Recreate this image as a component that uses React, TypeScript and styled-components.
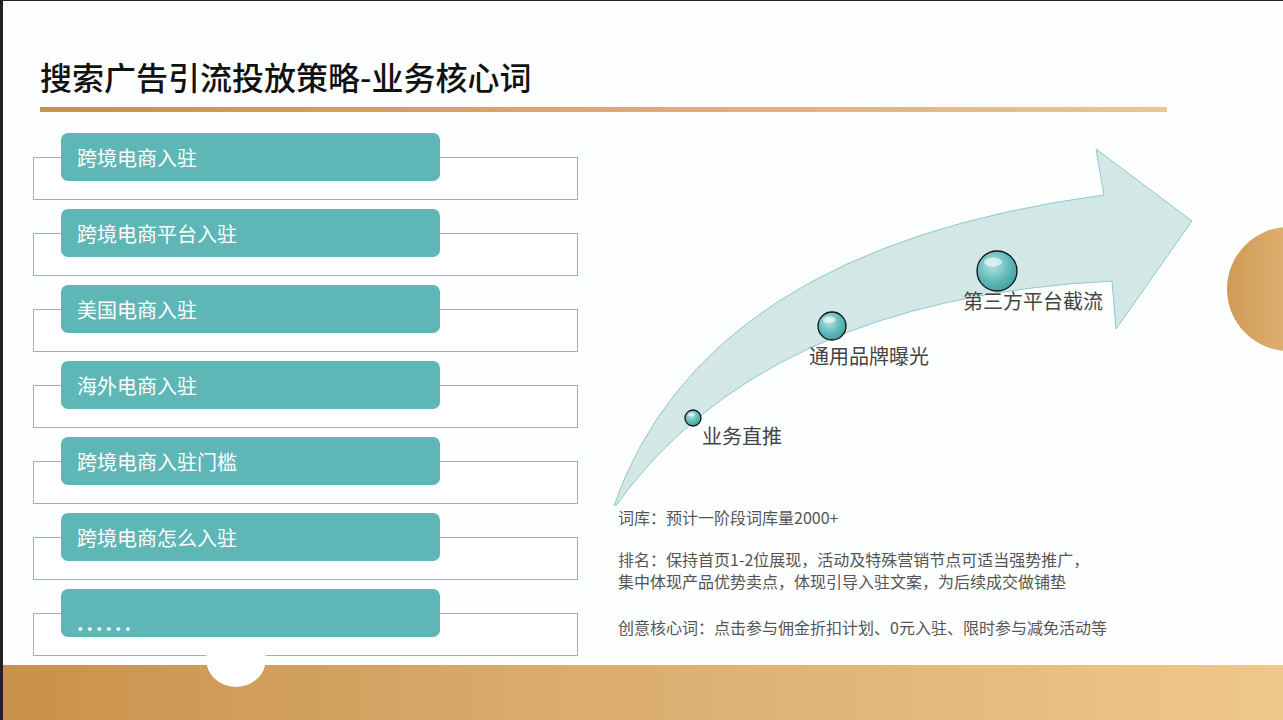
import styled, { createGlobalStyle } from 'styled-components';

const Global = createGlobalStyle`
  body { margin: 0; background: #fff; }
`;

const Page = styled.div`
  position: relative;
  width: 1280px;
  height: 719px;
  border-left: 3px solid #222;
  border-top: 1px solid #222;
  background: #fdfefe;
  overflow: hidden;
  font-family: "Noto Sans CJK SC", "Noto Sans", sans-serif;
  display: flex;
  flex-direction: column;
`;

const Title = styled.h1`
  margin: 55px 0 0 37px;
  font-size: 32px;
  line-height: 40px;
  font-weight: 500;
  color: #111;
`;

const GoldLine = styled.div`
  margin: 11px 0 0 37px;
  width: 1127px;
  height: 6px;
  background: linear-gradient(90deg, #c9914a, #ecc68a);
`;

const Main = styled.div`
  display: flex;
  flex: 1;
  padding-top: 21px;
`;

const List = styled.div`
  margin-left: 30px;
  width: 545px;
  display: flex;
  flex-direction: column;
`;

const Item = styled.div`
  display: grid;
  height: 76px;
`;

const Box = styled.div`
  grid-area: 1 / 1;
  margin-top: 24px;
  height: 41px;
  border: 1.5px solid #78c2c2;
  background: #fff;
`;

const Pill = styled.div<{ $dots?: boolean }>`
  grid-area: 1 / 1;
  z-index: 1;
  margin-left: 28px;
  width: 379px;
  height: 48px;
  border-radius: 7px;
  background: #5fb6b6;
  color: #fff;
  font-size: 20px;
  display: flex;
  align-items: ${p => (p.$dots ? 'flex-end' : 'center')};
  padding-left: 16px;
  box-sizing: border-box;
  letter-spacing: ${p => (p.$dots ? '3px' : '0')};
  font-weight: ${p => (p.$dots ? 700 : 400)};
`;

const Right = styled.div`
  margin-left: 15px;
  flex: 1;
  display: flex;
  flex-direction: column;
`;

const Canvas = styled.div`
  position: relative;
  height: 373px;
`;

const Label = styled.span<{ $x: number; $y: number }>`
  position: absolute;
  left: ${p => p.$x}px;
  top: ${p => p.$y}px;
  font-size: 20px;
  color: #444;
  white-space: nowrap;
`;

const Notes = styled.div`
  padding-left: 25px;
  font-size: 16px;
  line-height: 22px;
  color: #555;
  p { margin: 0; }
  p + p { margin-top: 20px; }
  p:last-child { margin-top: 24px; }
`;

const Footer = styled.div`
  height: 55px;
  background: linear-gradient(90deg, #c9914a, #d8aa6c 40%, #eec88a);
  flex-shrink: 0;
`;

const HalfDot = styled.div`
  position: absolute;
  left: 203px;
  top: 630px;
  width: 60px;
  height: 56px;
  border-radius: 50%;
  background: #fff;
`;

const SideCircle = styled.div`
  position: absolute;
  left: 1224px;
  top: 226px;
  width: 124px;
  height: 124px;
  border-radius: 50%;
  background: linear-gradient(90deg, #cf9a55, #eec68c);
`;

const items = ['跨境电商入驻', '跨境电商平台入驻', '美国电商入驻', '海外电商入驻', '跨境电商入驻门槛', '跨境电商怎么入驻'];

// canvas origin = page (593, 134)
const Ball = ({ cx, cy, r }: { cx: number; cy: number; r: number }) => (
  <g>
    <circle cx={cx} cy={cy} r={r} fill="url(#ball)" stroke="#111" strokeWidth="1.3" />
    <ellipse cx={cx - r * 0.2} cy={cy - r * 0.45} rx={r * 0.45} ry={r * 0.22} fill="#fff" opacity="0.6" />
  </g>
);

export default function App() {
  return (
    <>
      <Global />
      <Page>
        <Title>搜索广告引流投放策略-业务核心词</Title>
        <GoldLine />
        <Main>
          <List>
            {items.map(t => (
              <Item key={t}>
                <Box />
                <Pill>{t}</Pill>
              </Item>
            ))}
            <Item>
              <Box />
              <Pill $dots>......</Pill>
            </Item>
          </List>
          <Right>
            <Canvas>
              <svg width="690" height="373" viewBox="593 134 690 373" style={{ position: 'absolute', left: 0, top: 0 }}>
                <defs>
                  <radialGradient id="ball" cx="0.4" cy="0.35" r="0.7">
                    <stop offset="0" stopColor="#b5e3e3" />
                    <stop offset="0.6" stopColor="#5fb9b9" />
                    <stop offset="1" stopColor="#3f9d9d" />
                  </radialGradient>
                </defs>
                <path
                  d="M612 512 Q 700 250 1104 196 L 1096 150 L 1192 222 L 1116 330 L 1112 282 Q 760 300 612 512 Z"
                  fill="#d3e7e7"
                  stroke="#8ec9c9"
                  strokeWidth="1"
                />
                <Ball cx={693} cy={419} r={8} />
                <Ball cx={832} cy={327} r={14} />
                <Ball cx={997} cy={272} r={20} />
              </svg>
              <Label $x={370} $y={153}>第三方平台截流</Label>
              <Label $x={216} $y={208}>通用品牌曝光</Label>
              <Label $x={109} $y={288}>业务直推</Label>
            </Canvas>
            <Notes>
              <p>词库：预计一阶段词库量2000+</p>
              <p>排名：保持首页1-2位展现，活动及特殊营销节点可适当强势推广，<br />集中体现产品优势卖点，体现引导入驻文案，为后续成交做铺垫</p>
              <p>创意核心词：点击参与佣金折扣计划、0元入驻、限时参与减免活动等</p>
            </Notes>
          </Right>
        </Main>
        <Footer />
        <HalfDot />
        <SideCircle />
      </Page>
    </>
  );
}
